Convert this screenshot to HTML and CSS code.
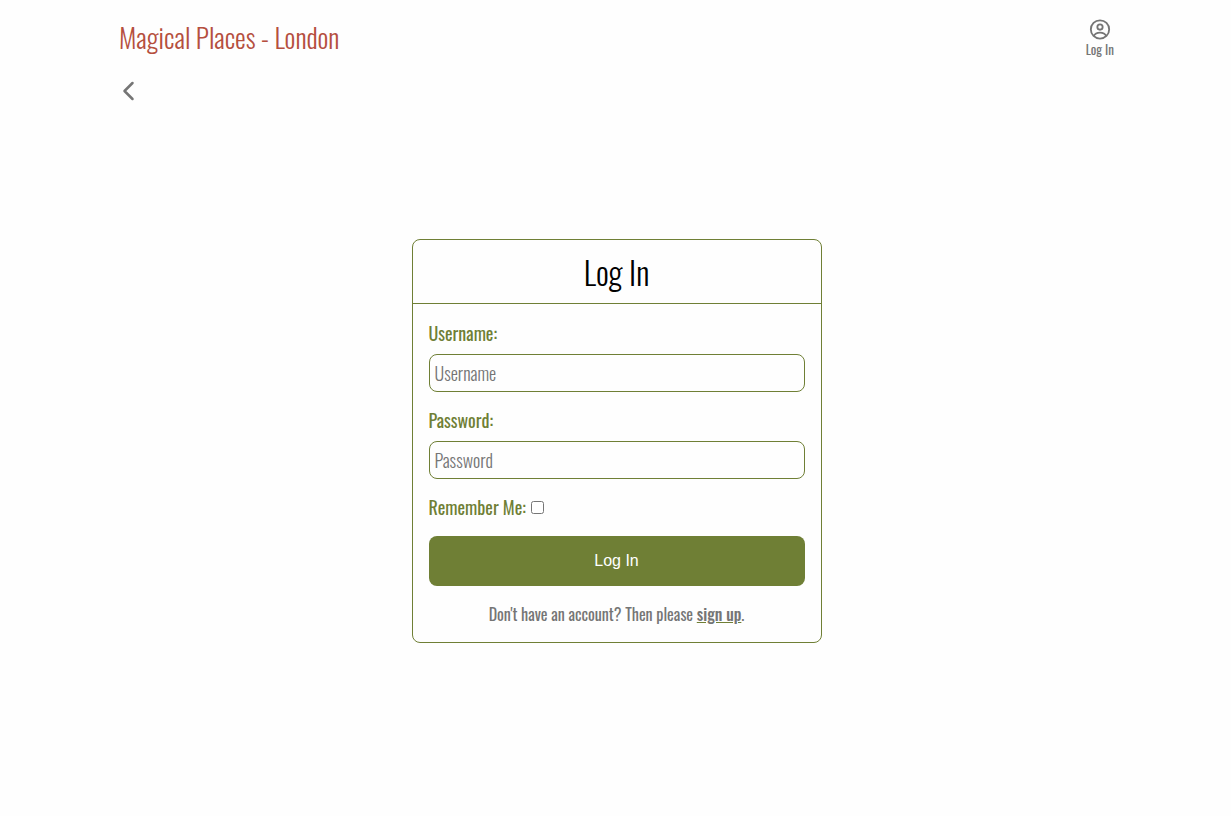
FILE: index.html
```html
<!DOCTYPE html>
<html lang="en">
<head>
<meta charset="utf-8">
<meta name="viewport" content="width=device-width, initial-scale=1">
<title>Magical Places - London</title>
<link rel="stylesheet" href="styles.css">
</head>
<body>
<header class="header">
  <a class="brand" href="#">Magical Places - London</a>
  <a class="account" href="#">
    <svg class="account-icon" viewBox="0 0 24 24" aria-hidden="true"><circle cx="12" cy="12.500" r="10"/><circle cx="12" cy="9.900" r="2.900"/><path d="M5.300 19.500c1.200-2.600 3.500-3.600 6.700-3.600s5.500 1 6.700 3.600"/></svg>
    <span>Log In</span>
  </a>
</header>
<nav class="back">
  <a class="back-link" href="#" aria-label="Back">
    <svg class="back-icon" viewBox="0 0 18 24" aria-hidden="true"><path d="M13.500 5L5.500 13l8 8"/></svg>
  </a>
</nav>
<main class="main">
  <form class="card">
    <h1 class="card-title">Log In</h1>
    <div class="card-body">
      <div class="field">
        <label class="label" for="username">Username:</label>
        <input class="input" id="username" type="text" placeholder="Username">
      </div>
      <div class="field">
        <label class="label" for="password">Password:</label>
        <input class="input" id="password" type="password" placeholder="Password">
      </div>
      <div class="remember">
        <label class="label" for="remember">Remember Me:</label>
        <input class="checkbox" id="remember" type="checkbox">
      </div>
      <button class="submit" type="submit">Log In</button>
      <p class="signup">Don't have an account? Then please <a class="signup-link" href="#">sign up</a>.</p>
    </div>
  </form>
</main>
</body>
</html>
```
FILE: styles.css
```css
* {
  box-sizing: border-box;
}

body {
  display: flex;
  flex-direction: column;
  min-height: 100vh;
  margin: 0;
  padding: 0 117px 40px 119px;
  background: #fefefe;
  color: #757575;
  font-family: Oswald, "Liberation Sans Narrow", "Liberation Sans", sans-serif;
}

.header {
  display: flex;
  align-items: center;
  justify-content: space-between;
  height: 74px;
}

.brand {
  color: #b54f3e;
  font-size: 27px;
  font-weight: 300;
  text-decoration: none;
}

.account {
  display: flex;
  flex-direction: column;
  align-items: center;
  gap: 1px;
  color: #757575;
  font-size: 13px;
  line-height: 16px;
  text-decoration: none;
}

.account-icon {
  width: 22px;
  height: 22px;
  fill: none;
  stroke: currentColor;
  stroke-width: 2;
}

.back {
  display: flex;
  height: 32px;
}

.back-link {
  display: flex;
  align-items: center;
  color: #757575;
}

.back-icon {
  width: 18px;
  height: 24px;
  fill: none;
  stroke: currentColor;
  stroke-width: 2.5;
  stroke-linecap: round;
  stroke-linejoin: round;
}

.main {
  display: flex;
  flex: 1;
  align-items: center;
  justify-content: center;
}

.card {
  width: 100%;
  max-width: 410px;
  border: 1px solid #6f7f35;
  border-radius: 8px;
}

.card-title {
  margin: 0;
  border-bottom: 1px solid #6f7f35;
  color: #000;
  font-size: 32px;
  font-weight: 300;
  line-height: 63px;
  text-align: center;
}

.card-body {
  display: flex;
  flex-direction: column;
  gap: 15px;
  padding: 16px 16px 15px;
}

.field {
  display: flex;
  flex-direction: column;
  gap: 7px;
}

.label {
  color: #6f7f35;
  font-size: 18px;
  font-weight: 400;
  line-height: 27px;
}

.input {
  width: 100%;
  height: 38px;
  padding: 0 5px;
  border: 1px solid #6f7f35;
  border-radius: 8px;
  background: #fefefe;
  color: #000;
  font-family: inherit;
  font-size: 18px;
  font-weight: 300;
}

.input::placeholder {
  color: #757575;
}

.remember {
  display: flex;
  align-items: center;
  gap: 5px;
}

.checkbox {
  width: 13px;
  height: 13px;
  margin: 0;
}

.submit {
  height: 50px;
  padding: 0 16px 1px;
  border: 0;
  border-radius: 8px;
  background: #6f7f35;
  color: #fff;
  font-family: "Liberation Sans", Arial, sans-serif;
  font-size: 16px;
  font-weight: 400;
}

.signup {
  margin: 0;
  font-size: 16px;
  line-height: 26px;
  text-align: center;
}

.signup-link {
  color: inherit;
  font-weight: 500;
  text-decoration-color: #6f7f35;
}
```
